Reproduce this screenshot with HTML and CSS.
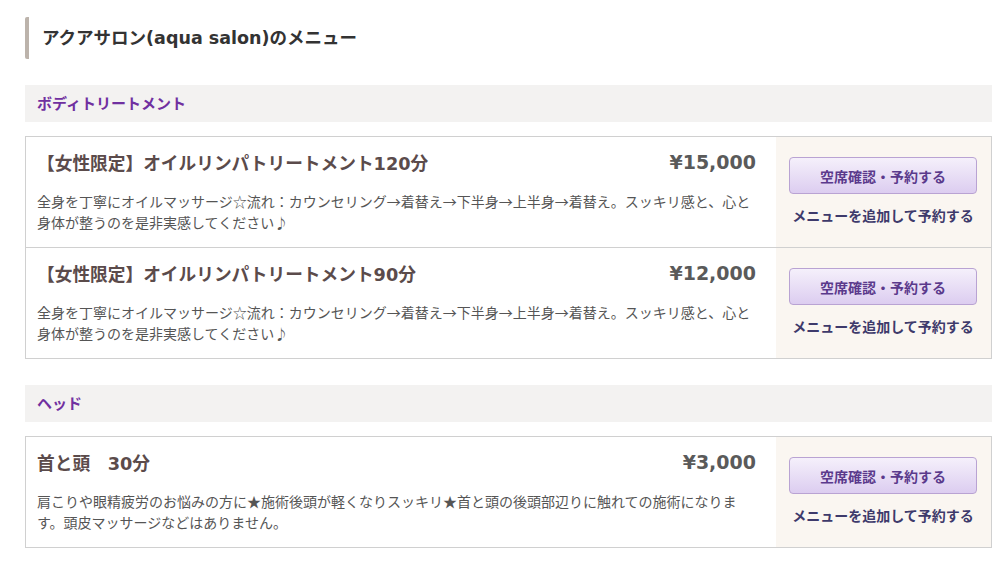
FILE: index.html
```html
<!DOCTYPE html>
<html lang="ja">
<head>
<meta charset="utf-8">
<title>アクアサロン(aqua salon)のメニュー</title>
<link rel="stylesheet" href="styles.css">
</head>
<body>
<div class="page">
  <h2 class="page-title">アクアサロン(aqua salon)のメニュー</h2>

  <section class="category">
    <h3 class="category-title">ボディトリートメント</h3>
    <div class="card">
      <div class="row">
        <div class="main">
          <div class="head">
            <h4 class="name">【女性限定】オイルリンパトリートメント120分</h4>
            <div class="price">¥15,000</div>
          </div>
          <p class="desc">全身を丁寧にオイルマッサージ☆流れ：カウンセリング→着替え→下半身→上半身→着替え。スッキリ感と、心と身体が整うのを是非実感してください♪</p>
        </div>
        <div class="side">
          <a class="btn">空席確認・予約する</a>
          <a class="add">メニューを追加して予約する</a>
        </div>
      </div>
      <div class="row">
        <div class="main">
          <div class="head">
            <h4 class="name">【女性限定】オイルリンパトリートメント90分</h4>
            <div class="price">¥12,000</div>
          </div>
          <p class="desc">全身を丁寧にオイルマッサージ☆流れ：カウンセリング→着替え→下半身→上半身→着替え。スッキリ感と、心と身体が整うのを是非実感してください♪</p>
        </div>
        <div class="side">
          <a class="btn">空席確認・予約する</a>
          <a class="add">メニューを追加して予約する</a>
        </div>
      </div>
    </div>
  </section>

  <section class="category">
    <h3 class="category-title">ヘッド</h3>
    <div class="card">
      <div class="row">
        <div class="main">
          <div class="head">
            <h4 class="name">首と頭　30分</h4>
            <div class="price">¥3,000</div>
          </div>
          <p class="desc">肩こりや眼精疲労のお悩みの方に★施術後頭が軽くなりスッキリ★首と頭の後頭部辺りに触れての施術になります。頭皮マッサージなどはありません。</p>
        </div>
        <div class="side">
          <a class="btn">空席確認・予約する</a>
          <a class="add">メニューを追加して予約する</a>
        </div>
      </div>
    </div>
  </section>
</div>
</body>
</html>
```

FILE: styles.css
```css
* { box-sizing: border-box; }
html, body { margin: 0; padding: 0; background: #fff; }
body {
  font-family: "DejaVu Sans", "Noto Sans CJK JP", sans-serif;
  color: #555;
}
.page {
  padding: 17px 8px 0 25px;
}
.page-title {
  margin: 0;
  height: 42px;
  display: flex;
  align-items: center;
  padding: 0 0 4px 13px;
  border-left: 4px solid #bcb3ab;
  border-radius: 2px;
  font-size: 17.5px;
  font-weight: bold;
  color: #333;
}
.category { margin-top: 26px; }
.category-title {
  margin: 0 0 14px;
  height: 37px;
  display: flex;
  align-items: center;
  padding: 0 0 3px 12px;
  background: #f3f2f1;
  font-family: "Noto Sans CJK JP", sans-serif;
  font-size: 15px;
  font-weight: bold;
  color: #7030a0;
}
.card {
  border: 1px solid #d0d0d0;
  background: #fff;
}
.row {
  display: flex;
}
.row + .row { border-top: 1px solid #d0d0d0; }
.main {
  flex: 1;
  padding: 12px 20px 14px 11px;
}
.head {
  display: flex;
  justify-content: space-between;
  align-items: center;
  height: 26px;
}
.name {
  margin: 0;
  font-size: 17.7px;
  font-weight: bold;
  color: #5b4b4b;
}
.price {
  font-size: 19px;
  font-weight: bold;
  color: #5a5a5a;
}
.desc {
  margin: 16px 0 0;
  font-family: "Noto Sans CJK JP", sans-serif;
  font-size: 14px;
  line-height: 21px;
  color: #555;
}
.side {
  width: 215px;
  flex: none;
  background: #faf6f1;
  padding: 20px 14px 0 13px;
  display: flex;
  flex-direction: column;
  align-items: stretch;
}
.btn {
  display: flex;
  align-items: center;
  justify-content: center;
  height: 37px;
  border: 1px solid #b9a3d3;
  border-radius: 4px;
  background: linear-gradient(#f5f0fb, #dccdf0);
  font-family: "Noto Sans CJK JP", sans-serif;
  font-size: 14px;
  font-weight: bold;
  color: #5b3a8c;
}
.add {
  display: block;
  margin-top: 11px;
  text-align: center;
  font-family: "Noto Sans CJK JP", sans-serif;
  font-size: 14px;
  font-weight: bold;
  line-height: 21px;
  color: #3e3a6b;
}
```
